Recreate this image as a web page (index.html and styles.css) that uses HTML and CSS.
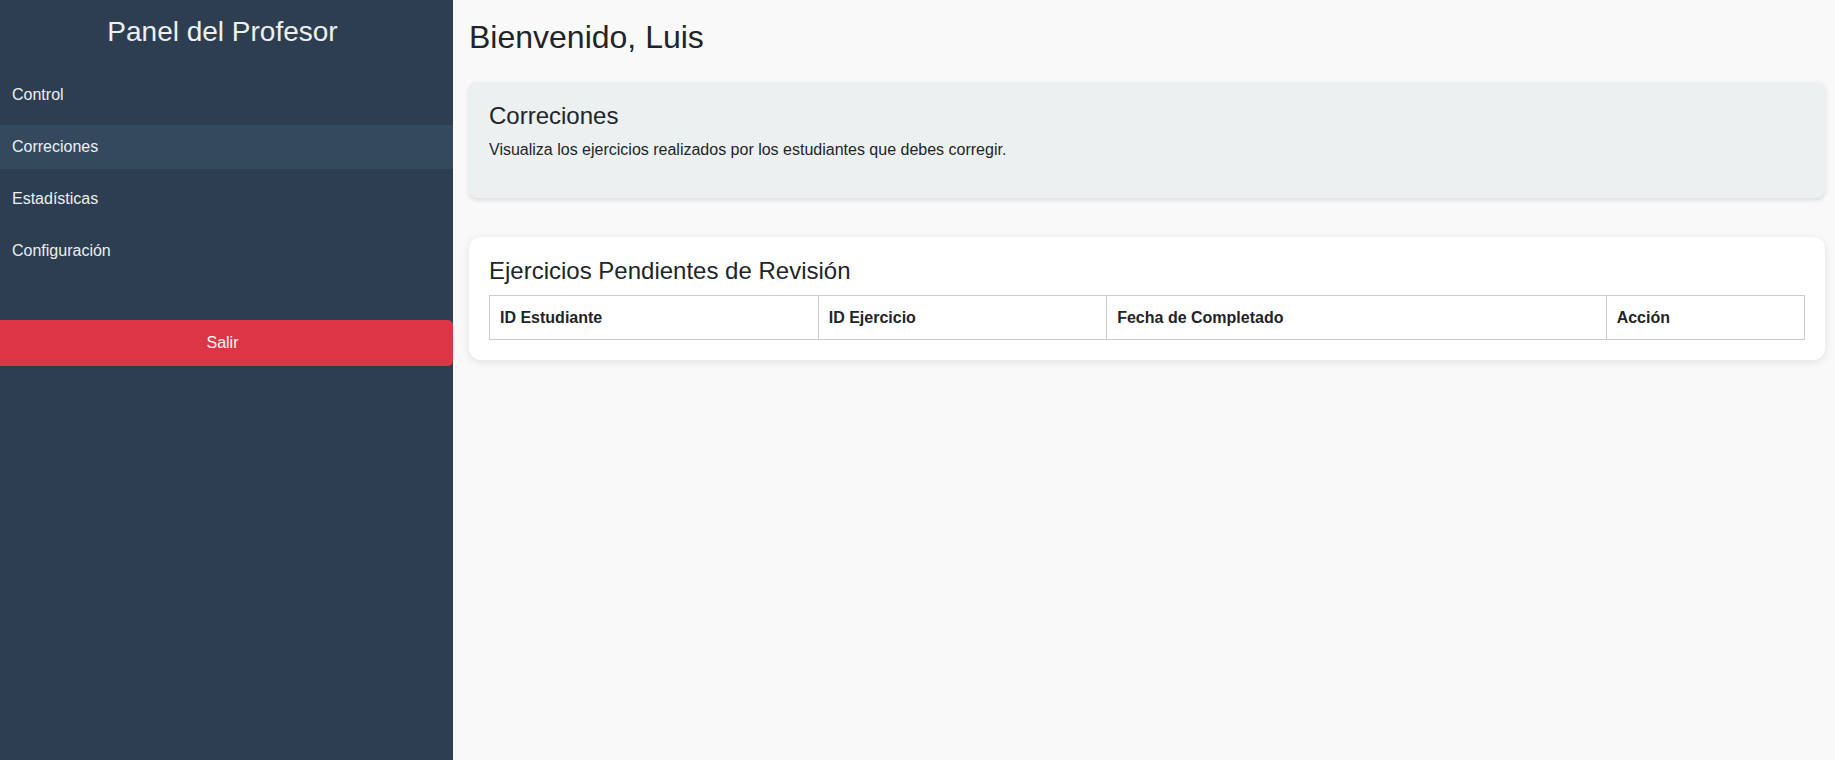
FILE: index.html
```html
<!DOCTYPE html>
<html lang="es">
<head>
<meta charset="utf-8">
<title>Panel del Profesor</title>
<link rel="stylesheet" href="styles.css">
</head>
<body>
<div class="layout">
  <aside class="sidebar">
    <div class="sidebar-inner">
      <h2 class="brand">Panel del Profesor</h2>
      <nav class="nav">
        <a class="nav-item" href="#">Control</a>
        <a class="nav-item active" href="#">Correciones</a>
        <a class="nav-item" href="#">Estadísticas</a>
        <a class="nav-item" href="#">Configuración</a>
      </nav>
      <button class="logout">Salir</button>
    </div>
  </aside>
  <main class="main">
    <h1 class="welcome">Bienvenido, Luis</h1>
    <section class="card info">
      <h2 class="card-title">Correciones</h2>
      <p class="card-text">Visualiza los ejercicios realizados por los estudiantes que debes corregir.</p>
    </section>
    <section class="card panel">
      <h2 class="card-title">Ejercicios Pendientes de Revisión</h2>
      <table class="table">
        <thead>
          <tr>
            <th>ID Estudiante</th>
            <th>ID Ejercicio</th>
            <th>Fecha de Completado</th>
            <th>Acción</th>
          </tr>
        </thead>
        <tbody></tbody>
      </table>
    </section>
  </main>
</div>
</body>
</html>
```

FILE: styles.css
```css
html, body {
  margin: 0;
  padding: 0;
  height: 100%;
}

body {
  font-family: "Liberation Sans", Arial, sans-serif;
  background: #f9f9f9;
  color: #212529;
  overflow: hidden;
}

.layout {
  display: flex;
  height: 760px;
}

.sidebar {
  width: 453px;
  flex: 0 0 453px;
  background: #2c3e50;
  overflow: hidden;
}

.sidebar-inner {
  margin-left: -8px;
  width: 461px;
  display: flex;
  flex-direction: column;
}

.brand {
  margin: 16px 0 25px;
  font-size: 28px;
  font-weight: normal;
  text-align: center;
  color: #ecf0f1;
  line-height: normal;
}

.nav {
  display: flex;
  flex-direction: column;
  gap: 8px;
}

.nav-item {
  display: block;
  padding: 13px 20px;
  color: #ecf0f1;
  text-decoration: none;
  font-size: 16px;
  line-height: normal;
}

.nav-item.active {
  background: #34495e;
  margin-left: 8px;
  padding-left: 12px;
}

.logout {
  margin-top: 47px;
  width: 100%;
  padding: 14px 0;
  border: none;
  border-radius: 5px;
  background: #dc3545;
  color: #f8f9fa;
  font-family: "Liberation Sans", Arial, sans-serif;
  font-size: 16px;
  line-height: normal;
  text-align: center;
}

.main {
  flex: 1;
  padding: 19px 10px 0 16px;
  display: flex;
  flex-direction: column;
}

.welcome {
  margin: 0 0 26px;
  font-size: 32px;
  font-weight: normal;
  color: #212529;
  line-height: normal;
}

.card {
  padding: 20px;
  border-radius: 8px;
}

.info {
  background: #ecf0f1;
  box-shadow: 0 2px 5px rgba(0, 0, 0, 0.12);
  margin-bottom: 39px;
}

.info .card-title {
  margin-bottom: 11px;
}

.panel {
  background: #ffffff;
  border-radius: 12px;
  box-shadow: 0 2px 8px rgba(0, 0, 0, 0.1);
}

.card-title {
  margin: 0 0 10px;
  font-size: 24px;
  font-weight: normal;
  color: #212529;
  line-height: normal;
}

.card-text {
  margin: 0 0 19px;
  font-size: 16px;
  line-height: normal;
  color: #212529;
}

.table {
  width: 100%;
  border-collapse: collapse;
}

.table th {
  border: 1px solid #cccccc;
  padding: 12.5px 10px;
  text-align: left;
  font-size: 16px;
  font-weight: bold;
  color: #212529;
  line-height: normal;
}
```
